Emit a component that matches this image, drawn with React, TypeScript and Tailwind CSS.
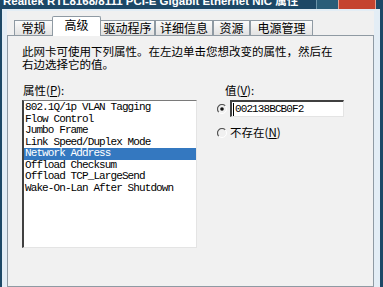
import React from 'react';

const cjk = { fontFamily: '"Noto Sans CJK SC", "Noto Sans", sans-serif' };
const mono = { fontFamily: '"Liberation Mono", "Noto Sans CJK SC", monospace' };

const tabs = [
    { t: '常规', w: 'w-[39px]' },
    { t: '高级', w: 'w-[49px]' },
    { t: '驱动程序', w: 'w-[55px]' },
    { t: '详细信息', w: 'w-[58px]' },
    { t: '资源', w: 'w-[37px]' },
    { t: '电源管理', w: 'w-[63px]' },
];

const props = [
    '802.1Q/1p VLAN Tagging',
    'Flow Control',
    'Jumbo Frame',
    'Link Speed/Duplex Mode',
    'Network Address',
    'Offload Checksum',
    'Offload TCP_LargeSend',
    'Wake-On-Lan After Shutdown',
];

const Radio: React.FC<{ checked?: boolean }> = ({ checked }) => (
    <svg width="10" height="10" viewBox="0 0 10 10" className="shrink-0">
        <circle cx="5" cy="5" r="4.5" fill="#f0f0f0" />
        <path d="M8.2 1.8 A4.5 4.5 0 0 0 1.8 8.2" stroke="#555" strokeWidth="1.2" fill="none" />
        <path d="M1.8 8.2 A4.5 4.5 0 0 0 8.2 1.8" stroke="#fff" strokeWidth="1" fill="none" />
        {checked && <circle cx="5" cy="5" r="1.8" fill="#111" />}
    </svg>
);

const App: React.FC = () => {
    return (
        <div className="w-[383px] h-[287px] overflow-hidden bg-[#1d4866] flex flex-col">
            {/* title bar, cut at the top */}
            <div className="h-[9px] shrink-0 flex overflow-hidden">
                <div
                    className="flex-1 text-white font-bold text-[11.5px] leading-[12px] -mt-[5px] pl-[3px] whitespace-nowrap overflow-hidden"
                    style={{ fontFamily: '"Liberation Sans", "Noto Sans CJK SC", sans-serif' }}
                >
                    Realtek RTL8168/8111 PCI-E Gigabit Ethernet NIC 属性
                </div>
                <div className="w-[22px] bg-[#2a5d78] border-l border-[#6b93a8]" />
                <div className="w-[38px] bg-[#c5432f] border-x border-[#e7a394]" />
                <div className="w-[7px]" />
            </div>

            <div className="flex-1 flex px-[2px] pr-[3px]">
                <div className="flex-1 bg-[#e3edf5] pl-[5px] pr-[6px] pt-[2px] flex flex-col">
                    <div className="flex-1 bg-[#f0f0f0] flex flex-col" style={cjk}>
                        {/* tabs */}
                        <div className="h-[24px] flex items-end pl-[7px] shrink-0">
                            {tabs.map((tab, i) =>
                                i === 1 ? (
                                    <div
                                        key={tab.t}
                                        className={`${tab.w} h-[20px] -mb-px -mx-px z-10 text-center bg-white border border-b-0 border-[#8f9aa3] rounded-t-[2px] text-[12px] leading-[16px] text-black`}
                                    >
                                        {tab.t}
                                    </div>
                                ) : (
                                    <div
                                        key={tab.t}
                                        className={`${tab.w} h-[15px] text-center bg-gradient-to-b from-[#fbfbfb] to-[#e2e2e2] border border-b-0 border-[#8f9aa3] text-[12px] leading-[14px] text-black`}
                                    >
                                        {tab.t}
                                    </div>
                                )
                            )}
                        </div>

                        {/* tab page */}
                        <div className="flex-1 border border-[#8f9aa3] bg-[#f1f1f1] pl-[14px] pt-[9px] text-[11.5px] text-black">
                            <div className="leading-[13px]">此网卡可使用下列属性。在左边单击您想改变的属性，然后在</div>
                            <div className="leading-[13px]">右边选择它的值。</div>

                            <div className="flex mt-[13px]">
                                <div className="w-[175px] shrink-0">
                                    <div className="leading-[13px] ml-[1px]">
                                        属性(<u>P</u>):
                                    </div>
                                    <div className="mt-[3px] h-[148px] bg-white border-l-2 border-t border-l-[#404040] border-t-[#7a7a7a] border-r border-b border-r-[#e4e4e4] border-b-[#e4e4e4] pt-[1px]">
                                        {props.map((p, i) => (
                                            <div
                                                key={p}
                                                className={`h-[11.5px] leading-[11.5px] text-[11px] pl-[1px] whitespace-nowrap tracking-[-0.9px] ${
                                                    i === 4 ? 'bg-[#3478c0] text-white' : 'text-black'
                                                }`}
                                                style={mono}
                                            >
                                                {p}
                                            </div>
                                        ))}
                                    </div>
                                </div>

                                <div className="ml-[20px] flex flex-col">
                                    <div className="ml-[8px] leading-[13px]">
                                        值(<u>V</u>):
                                    </div>
                                    <div className="flex items-center mt-[3px]">
                                        <Radio checked />
                                        <div className="ml-[3px] w-[114px] h-[17px] bg-white border-l-2 border-t-2 border-l-[#404040] border-t-[#404040] border-r border-b border-r-[#e4e4e4] border-b-[#e4e4e4] flex items-center pl-[1px]">
                                            <span className="w-px h-[13px] bg-black mr-[1px]" />
                                            <span className="text-[11px] tracking-[-0.9px]" style={mono}>
                                                002138BCB0F2
                                            </span>
                                        </div>
                                    </div>
                                    <div className="flex items-center mt-[9px]">
                                        <Radio />
                                        <span className="ml-[3px] leading-[13px]">
                                            不存在(<u>N</u>)
                                        </span>
                                    </div>
                                </div>
                            </div>
                        </div>
                    </div>
                </div>
            </div>
        </div>
    );
};

export default App;
